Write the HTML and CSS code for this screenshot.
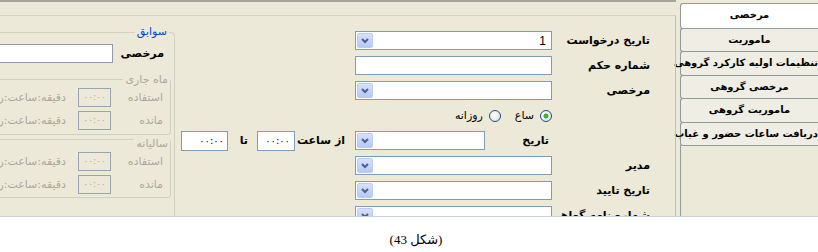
FILE: index.html
```html
<!DOCTYPE html>
<html lang="fa" dir="rtl">
<head>
    <meta charset="UTF-8">
    <title>مرخصی</title>
    <link rel="stylesheet" href="styles.css">
</head>
<body>
    <div class="shot">
        <div class="tabs">
            <div class="tab active">مرخصی</div>
            <div class="tab">ماموریت</div>
            <div class="tab">تنظیمات اولیه کارکرد گروهی</div>
            <div class="tab">مرخصی گروهی</div>
            <div class="tab">ماموریت گروهی</div>
            <div class="tab">دریافت ساعات حضور و غیاب</div>
            <div class="tabs-rest"></div>
        </div>

        <div class="page">
            <div class="topbar"></div>
            <div class="panel">
                <div class="form">
                    <div class="row">
                        <span class="label">تاریخ درخواست</span>
                        <div class="combo"><span class="value">1</span><span class="drop"><svg width="16" height="15" viewBox="0 0 16 15"><path d="M5 6 L8 9 L11 6" fill="none" stroke="#4d6185" stroke-width="2"/></svg></span></div>
                    </div>
                    <div class="row">
                        <span class="label">شماره حکم</span>
                        <div class="text-input"></div>
                    </div>
                    <div class="row">
                        <span class="label">مرخصی</span>
                        <div class="combo"><span class="value"></span><span class="drop"><svg width="16" height="15" viewBox="0 0 16 15"><path d="M5 6 L8 9 L11 6" fill="none" stroke="#4d6185" stroke-width="2"/></svg></span></div>
                    </div>
                    <div class="row">
                        <span class="label"></span>
                        <span class="radio checked"></span>
                        <span class="radio-text">ساع</span>
                        <span class="radio second"></span>
                        <span class="radio-text">روزانه</span>
                    </div>
                    <div class="row">
                        <span class="label"></span>
                        <span class="label sub date-label">تاریخ</span>
                        <div class="combo short"><span class="value"></span><span class="drop"><svg width="16" height="15" viewBox="0 0 16 15"><path d="M5 6 L8 9 L11 6" fill="none" stroke="#4d6185" stroke-width="2"/></svg></span></div>
                        <span class="label sub from-label">از ساعت</span>
                        <div class="time">۰۰:۰۰</div>
                        <span class="label sub to-label">تا</span>
                        <div class="time wide">۰۰:۰۰</div>
                    </div>
                    <div class="row">
                        <span class="label">مدیر</span>
                        <div class="combo"><span class="value"></span><span class="drop"><svg width="16" height="15" viewBox="0 0 16 15"><path d="M5 6 L8 9 L11 6" fill="none" stroke="#4d6185" stroke-width="2"/></svg></span></div>
                    </div>
                    <div class="row">
                        <span class="label">تاریخ تایید</span>
                        <div class="combo"><span class="value"></span><span class="drop"><svg width="16" height="15" viewBox="0 0 16 15"><path d="M5 6 L8 9 L11 6" fill="none" stroke="#4d6185" stroke-width="2"/></svg></span></div>
                    </div>
                    <div class="row">
                        <span class="label">شماره نامه گواهی</span>
                        <div class="combo"><span class="value"></span><span class="drop"><svg width="16" height="15" viewBox="0 0 16 15"><path d="M5 6 L8 9 L11 6" fill="none" stroke="#4d6185" stroke-width="2"/></svg></span></div>
                    </div>
                </div>

                <div class="group history">
                    <span class="group-title">سوابق</span>
                    <div class="hist-row">
                        <span class="hist-label">مرخصی</span>
                        <div class="text-input hist-input"></div>
                    </div>

                    <div class="group period">
                        <span class="group-title">ماه جاری</span>
                        <div class="period-row">
                            <span class="period-label">استفاده</span>
                            <div class="time-box">۰۰:۰۰</div>
                            <span class="unit">دقیقه:ساعت:روز</span>
                        </div>
                        <div class="period-row">
                            <span class="period-label">مانده</span>
                            <div class="time-box">۰۰:۰۰</div>
                            <span class="unit">دقیقه:ساعت:روز</span>
                        </div>
                    </div>

                    <div class="group period yearly">
                        <span class="group-title">سالیانه</span>
                        <div class="period-row">
                            <span class="period-label">استفاده</span>
                            <div class="time-box">۰۰:۰۰</div>
                            <span class="unit">دقیقه:ساعت:روز</span>
                        </div>
                        <div class="period-row">
                            <span class="period-label">مانده</span>
                            <div class="time-box">۰۰:۰۰</div>
                            <span class="unit">دقیقه:ساعت:روز</span>
                        </div>
                    </div>
                </div>
            </div>
        </div>
    </div>

    <p class="caption">(شکل 43)</p>
</body>
</html>
```

FILE: styles.css
```css
body {
    margin: 0;
    width: 818px;
    background: #fff;
    font-family: "DejaVu Sans", sans-serif;
    font-size: 11px;
    color: #000;
}

.shot {
    display: flex;
    height: 216px;
    overflow: hidden;
    background: #ece9d8;
    border-bottom: 1px solid #c9d1dc;
}

/* Tabs on the right */
.tabs {
    width: 138px;
    flex-shrink: 0;
    display: flex;
    flex-direction: column;
    padding-top: 3px;
    box-sizing: border-box;
}

.tab {
    height: 24.4px;
    margin-top: -1px;
    box-sizing: border-box;
    border: 1px solid #919b9c;
    border-right: none;
    border-radius: 3px 0 0 3px;
    background: #efede4;
    font-size: 10px;
    font-weight: bold;
    text-align: center;
    line-height: 22px;
    white-space: nowrap;
}

.tab.active {
    height: 26px;
    margin-top: 0;
    background: #fff;
}

.tabs-rest {
    flex: 1;
    margin-top: -1px;
    border-left: 1px solid #919b9c;
}

/* Main page */
.page {
    flex: 1;
    display: flex;
    flex-direction: column;
    padding-right: 4px;
}

.topbar {
    height: 13px;
    flex-shrink: 0;
    border-top: 2px solid #a7a59b;
}

.panel {
    flex: 1;
    display: flex;
    overflow: hidden;
    border-top: 1px solid #d6d3c5;
    border-right: 1px solid #c4c1b3;
}

.form {
    width: 497px;
    flex-shrink: 0;
    box-sizing: border-box;
    padding: 12px 25px 0 0;
}

.row {
    display: flex;
    align-items: center;
    height: 25px;
}

.label {
    width: 95px;
    flex-shrink: 0;
    margin-left: 3px;
    font-weight: bold;
    text-align: right;
    white-space: nowrap;
}

.label.sub {
    margin-left: 0;
    box-sizing: border-box;
}

.date-label { width: 67px; padding-right: 3px; }
.from-label { width: 60px; padding-right: 10px; }
.to-label { width: 29px; padding-right: 9px; }

.combo,
.text-input {
    width: 197px;
    height: 19px;
    box-sizing: border-box;
    border: 1px solid #7f9db9;
    background: #fff;
    display: flex;
    align-items: center;
}

.combo.short { width: 130px; }

.combo .value {
    flex: 1;
    padding-right: 5px;
    font-size: 12px;
    font-family: "Liberation Sans", sans-serif;
}

.combo .drop {
    width: 16px;
    height: 15px;
    margin-left: 1px;
    box-sizing: border-box;
    border: 1px solid #bccbf0;
    border-radius: 2px;
    background: linear-gradient(#d6e1fd, #b5c8f7);
    display: flex;
}

.combo .drop svg {
    margin: -1px;
}

.radio {
    width: 12px;
    height: 12px;
    flex-shrink: 0;
    box-sizing: border-box;
    border: 1px solid #1c5180;
    border-radius: 50%;
    background: radial-gradient(circle at 40% 40%, #fff, #dcdbd3);
}

.radio.checked {
    background: radial-gradient(circle, #3cb43c 0 2.2px, transparent 2.8px),
                radial-gradient(circle at 40% 40%, #fff, #dcdbd3);
}

.radio.second { margin-right: 14px; }

.radio-text {
    margin-right: 6px;
    white-space: nowrap;
}

.time {
    width: 38px;
    height: 20px;
    box-sizing: border-box;
    border: 1px solid #7f9db9;
    background: #fff;
    text-align: right;
    padding-right: 4px;
    line-height: 18px;
    font-size: 10px;
}

.time.wide { width: 47px; padding-right: 3px; }

/* History group boxes */
.group {
    display: flex;
    flex-direction: column;
    align-items: flex-start;
    border: 1px solid #d0d0bf;
    border-radius: 4px;
}

.group-title {
    margin: -8px 2px 0 0;
    padding: 0 2px;
    line-height: 14px;
    background: #ece9d8;
    white-space: nowrap;
}

.history {
    width: 240px;
    height: 240px;
    flex-shrink: 0;
    box-sizing: border-box;
    margin: 16px 3px 0 0;
    padding: 0 3px 0 0;
}

.history > .group-title {
    color: #0046d5;
}

.hist-row {
    display: flex;
    align-items: center;
    height: 25px;
    margin-top: 2px;
    padding-right: 7px;
}

.hist-label {
    width: 47px;
    flex-shrink: 0;
    font-weight: bold;
    text-align: right;
}

.hist-input {
    width: 150px;
    flex-shrink: 0;
    margin-right: 4px;
    border-color: #8e9aab;
}

.period {
    align-self: stretch;
    margin-top: 13px;
    padding: 1px 0 2px 0;
    border-radius: 3px;
    color: #aca899;
}

.period.yearly {
    margin-top: 4px;
    padding: 5px 0 1px 0;
}

.period > .group-title {
    margin: -7px 0 0 0;
    line-height: 12px;
}

.period-row {
    display: flex;
    align-items: center;
    height: 23px;
    padding-right: 7px;
}

.period-label {
    width: 48px;
    flex-shrink: 0;
    text-align: right;
}

.time-box {
    width: 33px;
    height: 19px;
    flex-shrink: 0;
    margin-right: 4px;
    box-sizing: border-box;
    border: 1px solid #98a4b4;
    text-align: center;
    line-height: 17px;
    font-size: 9px;
}

.unit {
    margin-right: 12px;
    white-space: nowrap;
}

.caption {
    margin: 0;
    padding: 15px 0 0 14px;
    text-align: center;
    font-family: "Liberation Serif", "DejaVu Sans", serif;
    font-size: 13px;
}
```
